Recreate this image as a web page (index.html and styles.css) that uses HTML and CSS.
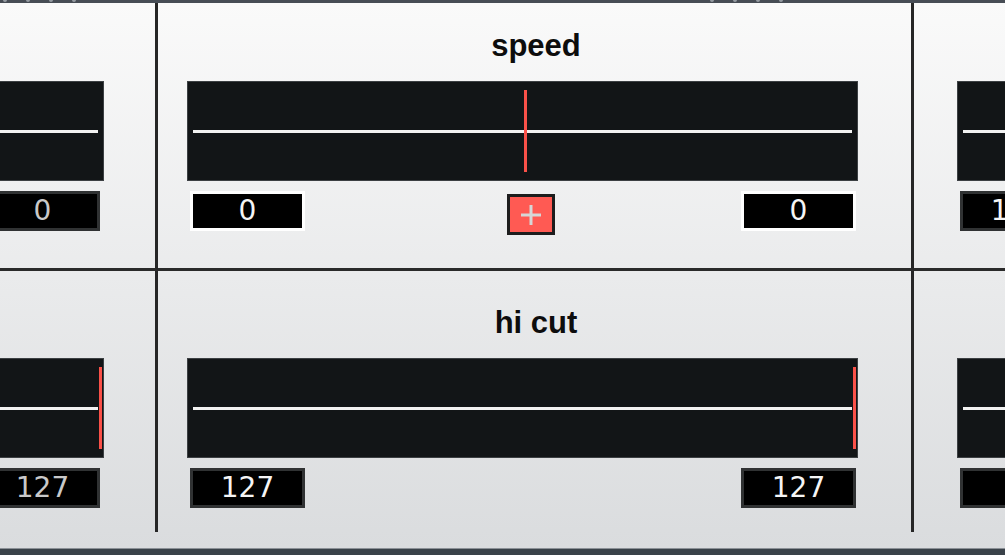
FILE: index.html
```html
<!DOCTYPE html>
<html lang="en">
<head>
    <meta charset="UTF-8">
    <meta name="viewport" content="width=device-width, initial-scale=1.0">
    <title>Filter Rack</title>
    <link rel="stylesheet" href="styles.css">
</head>
<body>
    <div class="topbar">
        <div class="ticks"><i></i><i></i><i></i><i></i></div>
        <div class="ticks far"><i></i><i></i><i></i><i></i></div>
    </div>

    <div class="rack">
        <div class="grid">
            <!-- row 1 -->
            <div class="cell top first dim">
                <div class="title">dry/wet</div>
                <div class="slider"><div class="track"><span class="marker" style="left: 0%"></span></div></div>
                <div class="values">
                    <span class="num">0</span>
                    <button class="add" type="button"><svg width="20" height="20" viewBox="0 0 20 20"><rect x="8.5" y="0" width="3" height="20"/><rect x="0" y="8.5" width="20" height="3"/></svg></button>
                    <span class="num">0</span>
                </div>
            </div>
            <div class="cell top">
                <div class="title">speed</div>
                <div class="slider"><div class="track"><span class="marker" style="left: 50%"></span></div></div>
                <div class="values active">
                    <span class="num">0</span>
                    <button class="add" type="button"><svg width="20" height="20" viewBox="0 0 20 20"><rect x="8.5" y="0" width="3" height="20"/><rect x="0" y="8.5" width="20" height="3"/></svg></button>
                    <span class="num">0</span>
                </div>
            </div>
            <div class="cell top last">
                <div class="title">feedback</div>
                <div class="slider"><div class="track"><span class="marker" style="left: 100%"></span></div></div>
                <div class="values">
                    <span class="num">127</span>
                    <button class="add" type="button"><svg width="20" height="20" viewBox="0 0 20 20"><rect x="8.5" y="0" width="3" height="20"/><rect x="0" y="8.5" width="20" height="3"/></svg></button>
                    <span class="num">127</span>
                </div>
            </div>

            <!-- row 2 -->
            <div class="cell first dim">
                <div class="title">volume</div>
                <div class="slider"><div class="track"><span class="marker" style="left: 100%"></span></div></div>
                <div class="values">
                    <span class="num">127</span>
                    <span class="num">127</span>
                </div>
            </div>
            <div class="cell">
                <div class="title">hi cut</div>
                <div class="slider"><div class="track"><span class="marker" style="left: 100%"></span></div></div>
                <div class="values">
                    <span class="num">127</span>
                    <span class="num">127</span>
                </div>
            </div>
            <div class="cell last">
                <div class="title">pan</div>
                <div class="slider"><div class="track"><span class="marker" style="left: 50%"></span></div></div>
                <div class="values">
                    <span class="num">0</span>
                    <span class="num">0</span>
                </div>
            </div>
        </div>
    </div>

    <div class="footer"></div>
</body>
</html>
```

FILE: styles.css
```css
* {
    box-sizing: border-box;
}
body {
    margin: 0;
    height: 100vh;
    overflow: hidden;
    display: flex;
    flex-direction: column;
    font-family: "Liberation Sans", Arial, sans-serif;
    background-color: #3a4249;
}
.topbar {
    height: 3px;
    flex-shrink: 0;
    display: flex;
    padding-left: 3px;
    overflow: hidden;
    background-color: #474d55;
}
.ticks {
    display: flex;
    gap: 19px;
}
.ticks.far {
    margin-left: 634px;
}
.ticks i {
    width: 4px;
    height: 4px;
    margin-top: -2px;
    border-radius: 50%;
    background-color: #959ba2;
}
.rack {
    flex: 1;
    min-height: 0;
    overflow: hidden;
    background: linear-gradient(#fafafa, #dadcde);
}
/* the rack is scrolled: only part of the outer columns shows */
.grid {
    display: grid;
    grid-template-columns: repeat(3, 756px);
    grid-template-rows: 277px 261px;
    margin: -9px 0 0 -598px;
}
.cell {
    display: flex;
    flex-direction: column;
    padding-top: 33px;
    border-right: 3px solid #262626;
}
.cell.top {
    border-bottom: 3px solid #2a2a2a;
}
.cell.last {
    border-right: none;
}
.title {
    text-align: center;
    font-size: 31px;
    font-weight: bold;
    line-height: 37px;
    color: #0d0d0d;
    padding-left: 3px;
}
.slider {
    height: 100px;
    margin: 17px 53px 0 29px;
    padding: 0 5px;
    display: flex;
    align-items: center;
    background-color: #121517;
    border: 1px solid #3c4043;
}
.track {
    flex: 1;
    height: 3px;
    position: relative;
    background-color: #f2f2f2;
}
.marker {
    position: absolute;
    top: -40px;
    width: 3px;
    height: 82px;
    margin-left: 1px;
    background-color: #fa5149;
}
.values {
    display: flex;
    justify-content: space-between;
    align-items: flex-start;
    margin: 10px 55px 0 32px;
}
.cell.first .slider {
    margin-right: 51px;
}
.cell.last .slider {
    margin-left: 43px;
}
.cell.last .values {
    margin-left: 46px;
}
.num {
    width: 115px;
    height: 40px;
    border: 3px solid #303233;
    background-color: #000;
    color: #f5f5f5;
    font-family: "DejaVu Sans", sans-serif;
    font-size: 28px;
    line-height: 34px;
    text-align: center;
}
.values.active .num {
    border-color: #fff;
}
.dim .num {
    color: #c9c9c9;
}
.add {
    width: 48px;
    height: 41px;
    margin: 3px 0 0 16px;
    padding: 0;
    display: flex;
    align-items: center;
    justify-content: center;
    border: 3px solid #1d1d1d;
    background-color: #ff5a53;
}
.add svg {
    fill: #d6d6d6;
}
.footer {
    height: 7px;
    flex-shrink: 0;
    background-color: #3a4249;
    border-top: 1px solid #8b9096;
}
```
